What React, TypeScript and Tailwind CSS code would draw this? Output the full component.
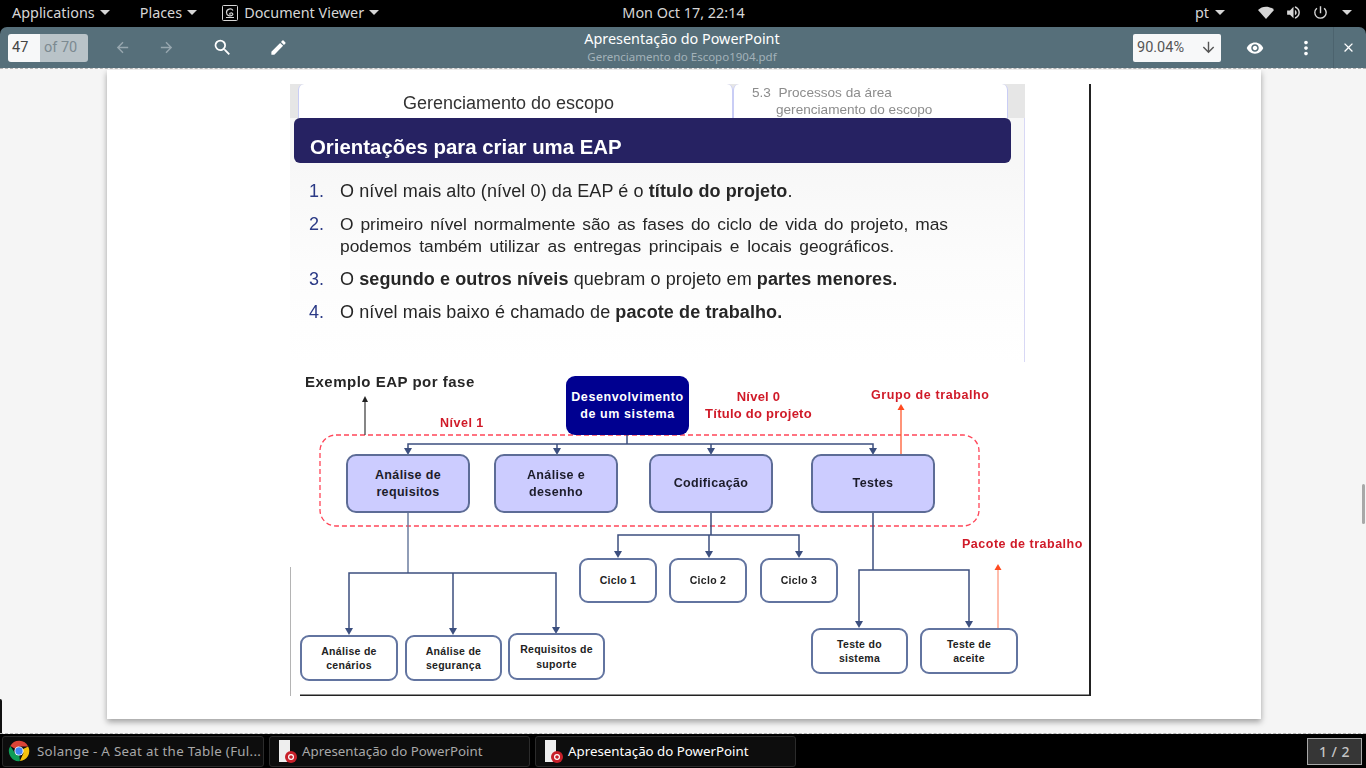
import React from "react";
import { MdArrowBack, MdArrowForward, MdSearch, MdEdit, MdRemoveRedEye, MdMoreVert, MdClose, MdArrowDownward, MdPowerSettingsNew, MdVolumeUp } from "react-icons/md";

const Caret = ({ className = "" }: { className?: string }) => (
  <svg width="10" height="5" viewBox="0 0 10 5" className={className}><path d="M0 0h10L5 5z" fill="currentColor" /></svg>
);

const Task = ({ w, icon, text, active, extra = "" }: { w: string; icon: React.ReactNode; text: string; active?: boolean; extra?: string }) => (
  <div className={`${w} h-[31px] flex items-center gap-[5px] pl-[5px] rounded-[3px] bg-[#0d0d0d] border border-[#2b2b2b] text-[13.3px] whitespace-nowrap overflow-hidden ${active ? "text-white" : "text-[#a8a8a8]"}`}>
    {icon}
    <span className={`pt-[2px] ${extra}`}>{text}</span>
  </div>
);

const Chrome = () => (
  <svg width="22" height="22" viewBox="0 0 48 48" className="shrink-0">
    <path d="M24 24 L5 13 A22 22 0 0 1 44 14 L24 14 z" fill="#db4437" />
    <path d="M24 24 L44 14 A22 22 0 0 1 26 46 L34 28 z" fill="#f4c20d" />
    <path d="M24 24 L26 46 A22 22 0 0 1 5 13 L16 30 z" fill="#0f9d58" />
    <circle cx="24" cy="24" r="10" fill="#fff" />
    <circle cx="24" cy="24" r="8" fill="#4285f4" />
  </svg>
);

const PdfIcon = () => (
  <div className="relative w-[22px] h-[24px] shrink-0">
    <div className="absolute left-[4px] top-[1px] w-[11px] h-[22px] bg-[#eeeeee]" />
    <svg width="12" height="12" viewBox="0 0 12 12" className="absolute left-[10px] top-[12px]">
      <circle cx="6" cy="6" r="6" fill="#c8202a" />
      <circle cx="6" cy="6" r="2.4" fill="none" stroke="#fff" strokeWidth="1.2" />
    </svg>
  </div>
);

const Box = ({ className, children }: { className: string; children: React.ReactNode }) => (
  <div className={`absolute flex items-center justify-center text-center font-bold ${className}`}>{children}</div>
);

const lv1 = "h-[59px] w-[124px] top-[92px] bg-[#ccccff] border-2 border-[#5d6c96] rounded-[10px] text-[12.5px] leading-[17px] text-[#1c1c2a] tracking-[0.35px]";
const wht = "bg-white border-2 border-[#6274a0] rounded-[9px] text-[#222] text-[10.5px] leading-[14.5px] tracking-[0.3px]";

const Arrow = ({ x, y, c = "#3c4f7f" }: { x: number; y: number; c?: string }) => (
  <path d={`M${x - 4} ${y - 6}h8l-4 7z`} fill={c} />
);

export default function App() {
  return (
    <div className="w-[1366px] h-[768px] bg-black overflow-hidden flex flex-col font-['Noto_Sans','Open_Sans',sans-serif]">
      {/* system bar */}
      <div className="h-[27px] shrink-0 grid grid-cols-3 items-center pb-[1px] text-[14.4px] text-[#d6d6d6]">
        <div className="flex items-center pl-[12px]">
          <span>Applications</span><Caret className="ml-[5px]" />
          <span className="ml-[30px]">Places</span><Caret className="ml-[5px]" />
          <svg width="16" height="16" viewBox="0 0 16 16" className="ml-[25px]">
            <rect x="0.5" y="0.5" width="15" height="15" rx="1" fill="none" stroke="#d6d6d6" />
            <path d="M11 5.5C9.5 3 4.5 3.5 4.5 7.5c0 3.500 4 4 6 2.500 1-1-.5-2.500-2-2-1 .3-1 1.500 0 1.500M4 12.500h8" fill="none" stroke="#d6d6d6" strokeWidth="1.200" />
          </svg>
          <span className="ml-[6px]">Document Viewer</span><Caret className="ml-[5px]" />
        </div>
        <div className="text-center pl-[1px]">Mon Oct 17, 22:14</div>
        <div className="flex items-center justify-end pr-[14px]">
          <span>pt</span><Caret className="ml-[6px]" />
          <svg width="16" height="13" viewBox="0 0 16 13" className="ml-[33px]"><path d="M0 4C4-.5 12-.5 16 4L8 13z" fill="#d6d6d6" /></svg>
          <MdVolumeUp size={17} className="ml-[11px]" />
          <MdPowerSettingsNew size={17} className="ml-[10px]" />
          <Caret className="ml-[13px]" />
        </div>
      </div>

      {/* toolbar */}
      <div className="h-[41px] shrink-0 bg-[#566f7a] rounded-t-[7px] flex items-center pl-[8px] relative font-['Roboto','Noto_Sans',sans-serif]">
        <div className="flex h-[28px] w-[80px] rounded-[3px] overflow-hidden text-[14.5px]">
          <div className="w-[32px] bg-[#f7f8f9] text-[#444] flex items-center pl-[4px]">47</div>
          <div className="w-[48px] bg-[#b9c3c8] text-[#7c8a91] flex items-center pl-[4px]">of 70</div>
        </div>
        <MdArrowBack size={17} className="ml-[26px] text-[#97a7af]" />
        <MdArrowForward size={17} className="ml-[27px] text-[#97a7af]" />
        <MdSearch size={21} className="ml-[37px] text-white" />
        <MdEdit size={19} className="ml-[36px] text-white" />
        <div className="absolute left-0 right-[2px] top-[3px] text-center leading-none pointer-events-none">
          <div className="text-[14.4px] leading-[18px] text-white font-['Noto_Sans',sans-serif]">Apresentação do PowerPoint</div>
          <div className="text-[11.5px] leading-[15px] mt-[1px] text-[#a3b2b9] font-['Noto_Sans',sans-serif]">Gerenciamento do Escopo1904.pdf</div>
        </div>
        <div className="ml-auto flex items-center">
          <div className="w-[88px] h-[28px] bg-[#f7f8f9] rounded-[2px] flex items-center pl-[4px] text-[14.5px] text-[#555]">
            <span>90.04%</span>
            <MdArrowDownward size={17} className="ml-auto mr-[4px] text-[#555]" />
          </div>
          <MdRemoveRedEye size={18} className="ml-[25px] text-white" />
          <MdMoreVert size={22} className="ml-[31px] text-white" />
          <div className="w-px h-[41px] bg-[#4c636e] ml-[16px]" />
          <MdClose size={15} className="ml-[7px] mr-[10px] text-white" />
        </div>
      </div>

      {/* viewer */}
      <div className="h-[666px] shrink-0 bg-[#f5f5f5] border-y border-dashed border-[#b4b4b4] relative pt-[1px] pl-[107px]">
        <div className="w-[1154px] h-[649px] bg-white shadow-[0_3px_6px_rgba(0,0,0,0.35)] pt-[14px] pl-[183px] relative">
          {/* slide */}
          <div className="w-[735px] text-[#262626] font-['Liberation_Sans',Arial,sans-serif] blur-[0.4px]">
            <div className="h-[34px] bg-[#e6e6e6] flex pl-[8px] pr-[17px]">
              <div className="w-[435px] bg-white border-x border-[#c9cdf5] rounded-t-[6px] flex items-center justify-center pt-[4px] pr-[14px] text-[18px] text-[#333]">Gerenciamento do escopo</div>
              <div className="flex-1 bg-white border-x border-[#c9cdf5] rounded-t-[6px] pl-[18px] text-[13.6px] leading-[17px] text-[#8c8c8c] whitespace-nowrap">
                <div>5.3&nbsp; Processos da área</div>
                <div className="pl-[24px]">gerenciamento do escopo</div>
              </div>
            </div>
            <div className="w-[735px] pl-[4px] border-r border-[#d8d8f5] bg-[#f7f7f7]">
              <div className="w-[717px] h-[45px] bg-[#262262] rounded-[6px] text-white font-bold text-[20.4px] pl-[16px] pt-[15px] leading-[28px]">Orientações para criar uma EAP</div>
            </div>
            <div className="h-[199px] w-[735px] border-r border-[#d8d8f5] bg-gradient-to-b from-[#f7f7f7] via-[#fcfcfc] via-50% to-white pl-[19px] pt-[17px] text-[18px] leading-[22px] tracking-[0.1px]">
              <div className="flex h-[33px]"><span className="w-[31px] text-[#2b3a86]">1.</span><span>O nível mais alto (nível 0) da EAP é o <b>título do projeto</b>.</span></div>
              <div className="flex h-[55px]"><span className="w-[31px] text-[#2b3a86]">2.</span>
                <div className="text-[17.4px] tracking-normal">
                  <div className="w-[608px] text-justify [text-align-last:justify]">O primeiro nível normalmente são as fases do ciclo de vida do projeto, mas</div>
                  <div className="w-[554px] text-justify [text-align-last:justify]">podemos também utilizar as entregas principais e locais geográficos.</div>
                </div>
              </div>
              <div className="flex h-[33px]"><span className="w-[31px] text-[#2b3a86]">3.</span><span>O <b>segundo e outros níveis</b> quebram o projeto em <b>partes menores.</b></span></div>
              <div className="flex h-[33px]"><span className="w-[31px] text-[#2b3a86]">4.</span><span>O nível mais baixo é chamado de <b>pacote de trabalho.</b></span></div>
            </div>
          </div>

          {/* page frame line */}
          <div className="absolute left-[982px] top-[14px] w-[2px] h-[612px] bg-[#222]" />

          {/* diagram canvas */}
          <div className="absolute left-[183px] top-[292px] w-[801px] h-[334px] font-['Liberation_Sans',Arial,sans-serif] blur-[0.4px]">
            <svg className="absolute inset-0" width="801" height="334" viewBox="290 362 801 334">
              <rect x="320" y="435" width="659" height="91" rx="16" fill="none" stroke="#ff4558" strokeWidth="1.300" strokeDasharray="5 3" />
              <g fill="none" stroke="#3c4f7f" strokeWidth="1.500">
                <path d="M627 435v9M408 449v-5h465v5M557 444v5M711 444v5" />
                <path d="M408 513v60" stroke="#6b7c9f" />
                <path d="M349 628v-55h207v55M453 573v55" />
                <path d="M711 513v22M618 551v-16h181v16M709 535v16" />
                <path d="M873 513v57M859 621v-51h110v51" />
              </g>
              <Arrow x={408} y={454} /><Arrow x={557} y={454} /><Arrow x={711} y={454} /><Arrow x={873} y={454} />
              <Arrow x={349} y={634} /><Arrow x={453} y={634} /><Arrow x={556} y={633} />
              <Arrow x={618} y={557} /><Arrow x={709} y={557} /><Arrow x={799} y={557} />
              <Arrow x={859} y={627} /><Arrow x={969} y={627} />
              <path d="M365 435v-36" stroke="#444" strokeWidth="1.300" />
              <path d="M365 396l3 6h-6z" fill="#222" />
              <path d="M901 454v-46" stroke="#ff5a30" strokeWidth="1.300" />
              <path d="M901 404l3.500 6h-7z" fill="#ff4a20" />
              <path d="M998 628v-59" stroke="#ff9a80" strokeWidth="1.300" />
              <path d="M998 564l3.500 6h-7z" fill="#ff4a20" />
              <path d="M290 567v129" stroke="#8c8c8c" strokeWidth="1.300" />
              <path d="M300 695.500h790" stroke="#222" strokeWidth="2" />
            </svg>
            <div className="absolute left-[15px] top-[11px] text-[15px] leading-[18px] font-bold text-[#262626] tracking-[0.5px] whitespace-nowrap">Exemplo EAP por fase</div>
            <Box className="left-[276px] top-[14px] w-[123px] h-[59px] bg-[#000090] rounded-[9px] text-white text-[12.5px] tracking-[0.6px] leading-[17px]"><span>Desenvolvimento<br />de um sistema</span></Box>
            <div className="absolute left-[150px] top-[53px] text-[12.5px] leading-[16px] font-bold text-[#d01a28] tracking-[0.5px]">Nível 1</div>
            <div className="absolute left-[415px] top-[27px] w-[107px] text-center text-[13px] leading-[16.5px] font-bold text-[#d01a28] tracking-[0.25px]">Nível 0<br /><span className="whitespace-nowrap">Título do projeto</span></div>
            <div className="absolute left-[581px] top-[25px] text-[12.5px] leading-[16px] font-bold text-[#d01a28] tracking-[0.6px] whitespace-nowrap">Grupo de trabalho</div>
            <div className="absolute left-[672px] top-[174px] text-[12.5px] leading-[16px] font-bold text-[#d01a28] tracking-[0.5px] whitespace-nowrap">Pacote de trabalho</div>

            <Box className={`left-[56px] ${lv1}`}><span>Análise de<br />requisitos</span></Box>
            <Box className={`left-[204px] ${lv1}`}><span>Análise e<br />desenho</span></Box>
            <Box className={`left-[359px] ${lv1}`}>Codificação</Box>
            <Box className={`left-[521px] ${lv1}`}>Testes</Box>

            <Box className={`left-[289px] top-[196px] w-[78px] h-[45px] ${wht}`}>Ciclo 1</Box>
            <Box className={`left-[379px] top-[196px] w-[78px] h-[45px] ${wht}`}>Ciclo 2</Box>
            <Box className={`left-[470px] top-[196px] w-[78px] h-[45px] ${wht}`}>Ciclo 3</Box>

            <Box className={`left-[10px] top-[273px] w-[98px] h-[46px] ${wht}`}><span>Análise de<br />cenários</span></Box>
            <Box className={`left-[115px] top-[273px] w-[97px] h-[46px] ${wht}`}><span>Análise de<br />segurança</span></Box>
            <Box className={`left-[218px] top-[271px] w-[97px] h-[47px] ${wht}`}><span>Requisitos de<br />suporte</span></Box>
            <Box className={`left-[521px] top-[266px] w-[97px] h-[46px] ${wht}`}><span>Teste do<br />sistema</span></Box>
            <Box className={`left-[630px] top-[266px] w-[98px] h-[46px] ${wht}`}><span>Teste de<br />aceite</span></Box>
          </div>
        </div>
        {/* scroll thumb */}
        <div className="absolute right-[1px] top-[415px] w-[3px] h-[40px] rounded-full bg-[#a8a8a8]" />
        <div className="absolute left-0 top-[630px] w-[2px] h-[34px] rounded-tr-[2px] bg-[#111]" />
      </div>

      {/* task bar */}
      <div className="flex-1 flex items-center pl-[2px] pr-[4px] gap-[5px] font-['Noto_Sans',sans-serif]">
        <Task w="w-[262px]" icon={<Chrome />} text="Solange - A Seat at the Table (Ful..." extra="ml-[2px] tracking-[0.3px]" />
        <Task w="w-[261px]" icon={<PdfIcon />} text="Apresentação do PowerPoint" />
        <Task w="w-[261px]" icon={<PdfIcon />} text="Apresentação do PowerPoint" active />
        <div className="ml-auto w-[55px] h-[27px] bg-[#363636] border border-[#a8a8a8] flex items-center justify-center text-[14px] font-medium text-[#c4c4c4] tracking-[0.5px]">1 / 2</div>
      </div>
    </div>
  );
}
